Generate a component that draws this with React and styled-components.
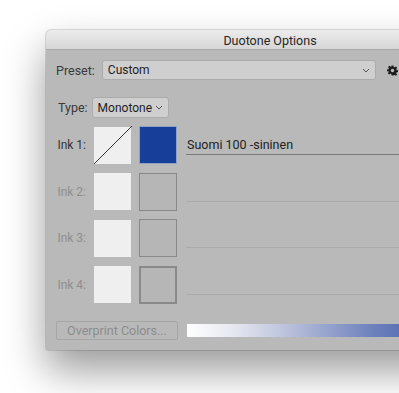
import React from 'react';
import styled, { createGlobalStyle } from 'styled-components';

const GlobalStyle = createGlobalStyle`
    html, body {
        margin: 0;
        padding: 0;
        background: #ffffff;
    }
    body {
        font-family: "Roboto", "Liberation Sans", sans-serif;
        font-size: 12px;
        color: #2b2b2b;
    }
`

const inks = [
    { label: 'Ink 1:', active: true, name: 'Suomi 100 -sininen' },
    { label: 'Ink 2:' },
    { label: 'Ink 3:' },
    { label: 'Ink 4:', thick: true },
];

function Gear() {
    return (
        <svg width="11" height="11" viewBox="0 0 24 24">
            <path
                fill="#1e1e1e"
                d="M10 1h4l.6 3.2 2.1.9 2.7-1.9 2.8 2.8-1.9 2.7.9 2.1 3.2.6v4l-3.2.6-.9 2.1 1.9 2.7-2.8 2.8-2.7-1.9-2.1.9L14 23h-4l-.6-3.2-2.1-.9-2.7 1.9-2.8-2.8 1.9-2.7-.9-2.1L0 14v-4l3.2-.6.9-2.1L2.2 4.6 5 1.8l2.7 1.9 2.1-.9z"
            />
            <circle cx="12" cy="12" r="3.6" fill="#b9b9b9" />
        </svg>
    );
}

function Chevron() {
    return (
        <svg width="8" height="5" viewBox="0 0 8 5">
            <path d="M1 1l3 3 3-3" fill="none" stroke="#555" strokeWidth="1" />
        </svg>
    );
}

function App() {
    return (
        <>
            <GlobalStyle />
            <Page>
                <Window>
                    <TitleBar>Duotone Options</TitleBar>
                    <Body>
                        <PresetRow>
                            <Label>Preset:</Label>
                            <Select $width="274px">
                                <span>Custom</span>
                                <Chevron />
                            </Select>
                            <GearBox><Gear /></GearBox>
                        </PresetRow>
                        <TypeRow>
                            <Label>Type:</Label>
                            <Select $width="77px">
                                <span>Monotone</span>
                                <Chevron />
                            </Select>
                        </TypeRow>
                        <InkList>
                            {inks.map((ink) => (
                                <InkRow key={ink.label}>
                                    <InkLabel $active={ink.active}>{ink.label}</InkLabel>
                                    <CurveSwatch>
                                        {ink.active && (
                                            <svg width="40" height="40" viewBox="0 0 40 40">
                                                <line x1="0" y1="38" x2="38" y2="0" stroke="#222" strokeWidth="0.9" />
                                            </svg>
                                        )}
                                    </CurveSwatch>
                                    <ColorSwatch $active={ink.active} $thick={ink.thick} />
                                    <NameField $active={ink.active}>{ink.name}</NameField>
                                </InkRow>
                            ))}
                        </InkList>
                        <BottomRow>
                            <OverprintButton>Overprint Colors...</OverprintButton>
                            <GradientBar />
                        </BottomRow>
                    </Body>
                </Window>
            </Page>
        </>
    );
}

export default App;

const Page = styled.div`
    width: 399px;
    height: 393px;
    overflow: hidden;
    padding: 30px 0 0 46px;
    box-sizing: border-box;
`
const Window = styled.div`
    width: 448px;
    background-color: #b9b9b9;
    border-radius: 5px 5px 3px 3px;
    box-shadow: 0 20px 40px rgba(0, 0, 0, 0.4), 0 0 0 1px rgba(0, 0, 0, 0.12);
    overflow: hidden;
`
const TitleBar = styled.div`
    height: 20px;
    line-height: 21px;
    text-align: center;
    font-size: 12.5px;
    color: #262626;
    background: linear-gradient(#ececec, #d6d6d6);
    border-bottom: 1px solid #a9a9a9;
    box-sizing: border-box;
`
const Body = styled.div`
    padding: 10px 0 10px 10px;
    display: flex;
    flex-direction: column;
`
const PresetRow = styled.div`
    display: flex;
    align-items: center;
    height: 20px;
    gap: 7px;
`
const TypeRow = styled.div`
    display: flex;
    align-items: center;
    height: 21px;
    margin-top: 17px;
    padding-left: 2px;
    gap: 4px;
`
const Label = styled.span`
    color: #3a3a3a;
    font-size: 12.5px;
`
const Select = styled.div`
    width: ${(p) => p.$width};
    flex-shrink: 0;
    height: 100%;
    box-sizing: border-box;
    display: flex;
    align-items: center;
    justify-content: space-between;
    padding: 0 5px 0 5px;
    background-color: #cfcfcf;
    border: 1px solid #ababab;
    border-radius: 3px;
    color: #1e1e1e;
    font-size: 12px;
    white-space: nowrap;

    svg {
        flex-shrink: 0;
    }
`
const GearBox = styled.div`
    display: flex;
    align-items: center;
    margin-left: 4px;
`
const InkList = styled.div`
    display: flex;
    flex-direction: column;
    gap: 8.5px;
    margin-top: 8px;
`
const InkRow = styled.div`
    display: flex;
    align-items: center;
    height: 38px;
`
const InkLabel = styled.span`
    width: 30px;
    white-space: nowrap;
    text-align: right;
    margin-right: 8px;
    font-size: 12px;
    color: ${(p) => (p.$active ? '#333' : '#8e8e8e')};
`
const CurveSwatch = styled.div`
    width: 37px;
    height: 37px;
    flex-shrink: 0;
    background-color: #efefef;
    position: relative;

    svg {
        position: absolute;
        left: 0;
        top: -1px;
    }
`
const ColorSwatch = styled.div`
    width: 38px;
    height: 38px;
    flex-shrink: 0;
    box-sizing: border-box;
    margin-left: 8px;
    background-color: ${(p) => (p.$active ? '#173f99' : '#b6b6b6')};
    border: ${(p) => (p.$thick ? '2px' : '1px')} solid ${(p) => (p.$active ? '#8ea0c4' : '#8a8a8a')};
`
const NameField = styled.div`
    flex: 1;
    margin-left: 9px;
    align-self: flex-start;
    margin-top: 9px;
    height: 20px;
    box-sizing: border-box;
    padding: 2px 0 0 1px;
    border-bottom: 1px solid ${(p) => (p.$active ? '#7a7a7a' : '#aaaaaa')};
    font-size: 12.5px;
    color: #222;
`
const BottomRow = styled.div`
    display: flex;
    align-items: center;
    margin-top: 17px;
    height: 19px;
`
const OverprintButton = styled.div`
    width: 122px;
    height: 19px;
    flex-shrink: 0;
    box-sizing: border-box;
    border: 1px solid #a6a6a6;
    border-radius: 2px;
    text-align: center;
    line-height: 17px;
    color: #8c8c8c;
    font-size: 12.5px;
`
const GradientBar = styled.div`
    flex: 1;
    margin-left: 9px;
    height: 13px;
    background: linear-gradient(90deg, #ffffff 0%, #e6e8f0 15%, #b4bcd9 35%, #6f82bd 60%, #3a58a8 85%, #2a4aa0 100%);
`
